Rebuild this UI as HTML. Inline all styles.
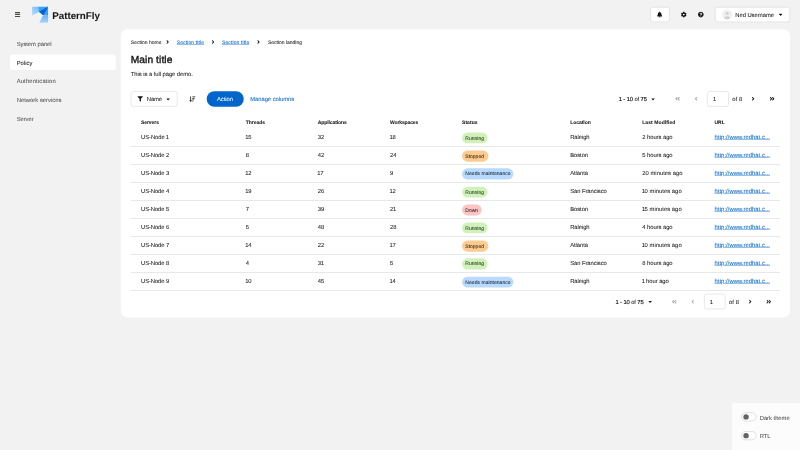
<!DOCTYPE html>
<html lang="en"><head><meta charset="utf-8"><title>PatternFly table demo</title>
<style>
html,body{margin:0;padding:0;width:800px;height:450px;overflow:hidden;background:#f2f2f2}
body{font-family:"Liberation Sans",sans-serif;color:#151515}
#stage{position:absolute;left:0;top:0;width:1920px;height:1080px;transform:scale(0.4166667);transform-origin:0 0;overflow:hidden;will-change:opacity;text-rendering:geometricPrecision}
.t{position:absolute;white-space:pre;margin:0;-webkit-text-stroke:0.1px}
.ic{position:absolute;display:block;overflow:visible}
.box{position:absolute;box-sizing:border-box}
.ctl{background:#fff;border:1px solid #c7c7c7;border-radius:6px}
.m{-webkit-text-stroke:0.35px}
.d1{margin:0 -1.1px}
a{color:#0066cc;text-decoration:underline}
.lbl{position:absolute;box-sizing:border-box;height:26.4px;border-radius:13.2px;font-size:12px;line-height:27.4px;padding:0 8px;white-space:pre;-webkit-text-stroke:0.1px}
.g{background:#d1f1bb;color:#1c2e10}.o{background:#fccb8f;color:#33200c}.b{background:#b9dafc;color:#0f2238}.r{background:#fbc5c5;color:#381414}
.line{position:absolute;left:314px;width:1558px;height:1px;background:#c7c7c7}
</style></head><body><div id="stage">

<svg class="ic" viewBox="0 0 448 512" width="12.25" height="14.00" style="left:35.88px;top:28.20px"><path fill="#151515" d="M16 132h416c8.837 0 16-7.163 16-16V76c0-8.837-7.163-16-16-16H16C7.163 60 0 67.163 0 76v40c0 8.837 7.163 16 16 16zm0 160h416c8.837 0 16-7.163 16-16v-40c0-8.837-7.163-16-16-16H16c-8.837 0-16 7.163-16 16v40c0 8.837 7.163 16 16 16zm0 160h416c8.837 0 16-7.163 16-16v-40c0-8.837-7.163-16-16-16H16c-8.837 0-16 7.163-16 16v40c0 8.837 7.163 16 16 16z"/></svg>
<svg class="ic" viewBox="0 0 100 100" width="38.4" height="38.4" style="left:76.8px;top:16.1px">
<defs><linearGradient id="lg1" x1="1" y1="0" x2="0" y2="1"><stop offset="0" stop-color="#74baf9"/><stop offset="1" stop-color="#b8ddfd"/></linearGradient><linearGradient id="lg2" x1="0" y1="0" x2="0" y2="1"><stop offset="0" stop-color="#66b3f8"/><stop offset="1" stop-color="#a8d5fc"/></linearGradient></defs>
<path fill="url(#lg1)" d="M0 6a6 6 0 0 1 6-6h33l5 31L0 56z"/>
<path fill="#3a9ff5" d="M38 0H100V57L69 53 43 31z"/>
<path fill="#0066cc" d="M100 0L43 31l27 23z"/>
<path fill="url(#lg2)" d="M69 53l31 4v37a6 6 0 0 1-6 6H45z"/>
</svg>
<div class="t" style="left:125.6px;top:22.6px;font-size:23.5px;line-height:30px;font-weight:700;letter-spacing:-0.1px;">PatternFly</div>
<div class="box ctl" style="left:1561px;top:17px;width:45.5px;height:36px"></div>
<svg class="ic" viewBox="0 0 448 512" width="12.25" height="14.00" style="left:1577.38px;top:28.00px"><path fill="#151515" d="M224 512c35.32 0 63.97-28.65 63.97-64H160.03c0 35.35 28.65 64 63.97 64zm215.39-149.71c-19.32-20.76-55.47-51.99-55.47-154.29 0-77.7-54.48-139.9-127.94-155.16V32c0-17.67-14.32-32-31.98-32s-31.98 14.33-31.98 32v20.84C118.56 68.1 64.08 130.3 64.08 208c0 102.3-36.15 133.53-55.47 154.29-6 6.45-8.66 14.16-8.61 21.71.11 16.4 12.98 32 32.1 32h383.8c19.12 0 32-15.6 32.1-32 .05-7.55-2.61-15.27-8.61-21.71z"/></svg>
<svg class="ic" viewBox="0 0 512 512" width="14.00" height="14.00" style="left:1634.00px;top:27.80px"><path fill="#151515" d="M487.4 315.7l-42.6-24.6c4.3-23.2 4.3-47 0-70.2l42.6-24.6c4.9-2.8 7.1-8.6 5.5-14-11.1-35.6-30-67.8-54.7-94.6-3.8-4.1-10-5.1-14.8-2.3L380.8 110c-17.9-15.4-38.5-27.3-60.8-35.1V25.8c0-5.6-3.9-10.5-9.4-11.7-36.7-8.2-74.3-7.8-109.2 0-5.5 1.2-9.4 6.1-9.4 11.7V75c-22.2 7.9-42.8 19.8-60.8 35.1L88.7 85.5c-4.9-2.8-11-1.9-14.8 2.3-24.7 26.7-43.6 58.9-54.7 94.6-1.700 5.400.600 11.200 5.500 14L67.300 221c-4.300 23.200-4.300 47 0 70.200l-42.600 24.600c-4.900 2.800-7.100 8.600-5.500 14 11.100 35.600 30 67.800 54.700 94.600 3.800 4.100 10 5.100 14.800 2.300l42.600-24.600c17.900 15.400 38.500 27.300 60.800 35.100v49.200c0 5.600 3.900 10.500 9.400 11.700 36.700 8.200 74.300 7.800 109.200 0 5.500-1.200 9.400-6.100 9.400-11.700v-49.200c22.200-7.900 42.800-19.800 60.800-35.100l42.600 24.600c4.900 2.800 11 1.900 14.800-2.300 24.700-26.700 43.600-58.900 54.700-94.600 1.500-5.500-.7-11.300-5.600-14.100zM256 336c-44.100 0-80-35.900-80-80s35.900-80 80-80 80 35.900 80 80-35.900 80-80 80z"/></svg>
<svg class="ic" viewBox="0 0 512 512" width="14.00" height="14.00" style="left:1675.00px;top:27.80px"><path fill="#151515" d="M504 256c0 136.997-111.043 248-248 248S8 392.997 8 256C8 119.083 119.043 8 256 8s248 111.083 248 248zM262.655 90c-54.497 0-89.255 22.957-116.549 63.758-3.536 5.286-2.353 12.415 2.715 16.258l34.699 26.31c5.205 3.947 12.621 3.008 16.665-2.122 17.864-22.658 30.113-35.797 57.303-35.797 20.429 0 45.698 13.148 45.698 32.958 0 14.976-12.363 22.667-32.534 33.976C247.128 238.528 216 254.941 216 296v4c0 6.627 5.373 12 12 12h56c6.627 0 12-5.373 12-12v-1.333c0-28.462 83.186-29.647 83.186-106.667 0-58.002-60.165-102-116.531-102zM256 338c-25.365 0-46 20.635-46 46 0 25.364 20.635 46 46 46s46-20.636 46-46c0-25.365-20.635-46-46-46z"/></svg>
<div class="box ctl" style="left:1716px;top:17px;width:179.5px;height:36px"></div>
<svg class="ic" viewBox="0 0 36 36" width="24" height="24" style="left:1732.5px;top:23px"><defs><clipPath id="av"><circle cx="18" cy="18" r="18"/></clipPath></defs><circle cx="18" cy="18" r="18" fill="#f0f0f0"/><circle cx="18" cy="13.600" r="5.800" fill="#d2d2d2"/><ellipse cx="18" cy="34" rx="11.500" ry="10" fill="#d2d2d2" clip-path="url(#av)"/></svg>
<div class="t" style="left:1764.7px;top:25.7px;font-size:14px;line-height:21px;letter-spacing:-0.11px;">Ned Username</div>
<svg class="ic" viewBox="0 0 320 512" width="8.75" height="14.00" style="left:1868.62px;top:28.30px"><path fill="#151515" d="M31.3 192h257.3c17.8 0 26.7 21.5 14.1 34.1L174.1 354.8c-7.8 7.8-20.5 7.8-28.300 0L17.200 226.100C4.600 213.500 13.500 192 31.300 192z"/></svg>
<div class="t" style="left:40.0px;top:94.9px;font-size:14px;line-height:21px;color:#4d4d4d;letter-spacing:-0.1px;">System panel</div>
<div class="box" style="left:24px;top:130.5px;width:254px;height:37.5px;background:#fff;border-radius:6px"></div>
<div class="t" style="left:40.0px;top:139.9px;font-size:14px;line-height:21px;letter-spacing:0.1px;">Policy</div>
<div class="t" style="left:40.0px;top:184.9px;font-size:14px;line-height:21px;color:#4d4d4d;letter-spacing:0.38px;">Authentication</div>
<div class="t" style="left:40.0px;top:229.9px;font-size:14px;line-height:21px;color:#4d4d4d;letter-spacing:0.06px;">Network services</div>
<div class="t" style="left:40.0px;top:274.9px;font-size:14px;line-height:21px;color:#4d4d4d;letter-spacing:-0.1px;">Server</div>
<div class="box" style="left:290px;top:69.5px;width:1606px;height:692.5px;background:#fff;border-radius:16px"></div>
<div class="t" style="left:313.8px;top:93.4px;font-size:12px;line-height:18px;letter-spacing:0.03px;">Section home</div>
<svg class="ic" viewBox="0 0 256 512" width="6.75" height="13.50" style="left:398.62px;top:94.05px"><path fill="#151515" d="M224.3 273l-136 136c-9.4 9.4-24.6 9.4-33.9 0l-22.6-22.6c-9.4-9.4-9.4-24.6 0-33.900l96.400-96.400-96.400-96.400c-9.400-9.400-9.400-24.600 0-33.900L54.300 103c9.400-9.400 24.600-9.400 33.900 0l136 136c9.500 9.400 9.500 24.600.1 34z"/></svg>
<div class="t" style="left:424.2px;top:93.4px;font-size:12px;line-height:18px;color:#0066cc;letter-spacing:0.28px;"><a>Section title</a></div>
<svg class="ic" viewBox="0 0 256 512" width="6.75" height="13.50" style="left:507.82px;top:94.05px"><path fill="#151515" d="M224.3 273l-136 136c-9.4 9.4-24.6 9.4-33.9 0l-22.6-22.6c-9.4-9.4-9.4-24.6 0-33.900l96.400-96.400-96.400-96.400c-9.400-9.400-9.400-24.600 0-33.900L54.300 103c9.400-9.400 24.600-9.400 33.900 0l136 136c9.500 9.400 9.500 24.600.1 34z"/></svg>
<div class="t" style="left:532.8px;top:93.4px;font-size:12px;line-height:18px;color:#0066cc;letter-spacing:0.28px;"><a>Section title</a></div>
<svg class="ic" viewBox="0 0 256 512" width="6.75" height="13.50" style="left:617.02px;top:94.05px"><path fill="#151515" d="M224.3 273l-136 136c-9.4 9.4-24.6 9.4-33.9 0l-22.6-22.6c-9.4-9.4-9.4-24.6 0-33.900l96.400-96.400-96.400-96.400c-9.400-9.400-9.400-24.600 0-33.900L54.300 103c9.400-9.400 24.600-9.400 33.900 0l136 136c9.500 9.400 9.500 24.600.1 34z"/></svg>
<div class="t" style="left:643.2px;top:93.4px;font-size:12px;line-height:18px;letter-spacing:-0.03px;">Section landing</div>
<div class="t" style="left:313.5px;top:129.1px;font-size:24.5px;line-height:32px;letter-spacing:0.25px;-webkit-text-stroke:0.9px;">Main title</div>
<div class="t" style="left:314.0px;top:168.3px;font-size:14px;line-height:21px;letter-spacing:-0.12px;">This is a full page demo.</div>
<div class="box ctl" style="left:314px;top:219.0px;width:112px;height:36.6px"></div>
<svg class="ic" viewBox="0 0 512 512" width="13.00" height="13.00" style="left:330.30px;top:230.80px"><path fill="#151515" d="M487.976 0H24.028C2.71 0-8.047 25.866 7.058 40.971L192 225.941V432c0 7.831 3.821 15.17 10.237 19.662l80 55.98C298.02 518.69 320 507.493 320 487.98V225.941l184.947-184.97C520.021 25.896 509.338 0 487.976 0z"/></svg>
<div class="t" style="left:352.3px;top:228.0px;font-size:14px;line-height:21px;letter-spacing:-0.2px;">Name</div>
<svg class="ic" viewBox="0 0 320 512" width="8.75" height="14.00" style="left:399.43px;top:230.70px"><path fill="#151515" d="M31.3 192h257.3c17.8 0 26.7 21.5 14.1 34.1L174.1 354.8c-7.8 7.8-20.5 7.8-28.300 0L17.200 226.100C4.600 213.500 13.500 192 31.300 192z"/></svg>
<svg class="ic" viewBox="0 0 16 14" width="15" height="13.5" style="left:453.80px;top:230.55px"><path fill="#151515" d="M2.700 0.400h2.200v9.400h1.600c.5 0 .7.5.4.9L4.300 13.600c-.3.300-.7.300-1 0L.700 10.700c-.3-.4-.1-.9.400-.9H3z"/><rect fill="#151515" x="8" y="0.4" width="7.8" height="2" rx=".5"/><rect fill="#151515" x="8" y="4.1" width="6" height="2" rx=".5"/><rect fill="#151515" x="8" y="7.800" width="4.200" height="2" rx=".5"/><rect fill="#151515" x="8" y="11.500" width="2.400" height="2" rx=".5"/></svg>
<div class="box" style="left:495.6px;top:219.0px;width:89.6px;height:36.6px;border-radius:18.3px;background:#0066cc"></div>
<div class="t" style="left:495.6px;top:228.0px;font-size:14px;line-height:21px;color:#fff;letter-spacing:-0.1px;width:88.8px;text-align:center;">Action</div>
<div class="t" style="left:600.6px;top:228.0px;font-size:14px;line-height:21px;color:#0066cc;letter-spacing:-0.11px;">Manage columns</div>
<div class="t" style="left:1485.0px;top:228.0px;font-size:14px;line-height:21px;letter-spacing:-0.3px;"><span class="m">1 - 10</span> of <span class="m">75</span></div><svg class="ic" viewBox="0 0 320 512" width="8.75" height="14.00" style="left:1563.42px;top:230.70px"><path fill="#151515" d="M31.3 192h257.3c17.8 0 26.7 21.5 14.1 34.1L174.1 354.8c-7.8 7.8-20.5 7.8-28.300 0L17.200 226.100C4.600 213.500 13.500 192 31.300 192z"/></svg><svg class="ic" viewBox="0 0 448 512" width="12.25" height="14.00" style="left:1619.88px;top:230.30px;transform:scaleX(-1)"><path fill="#a3a3a3" d="M224.3 273l-136 136c-9.4 9.4-24.6 9.4-33.9 0l-22.6-22.6c-9.4-9.4-9.4-24.6 0-33.9l96.400-96.400-96.400-96.400c-9.400-9.400-9.400-24.600 0-33.900L54.300 103c9.400-9.400 24.600-9.400 33.900 0l136 136c9.500 9.400 9.500 24.600.1 34zm192-34l-136-136c-9.400-9.400-24.600-9.400-33.900 0l-22.600 22.600c-9.400 9.400-9.400 24.600 0 33.900l96.400 96.400-96.400 96.400c-9.400 9.400-9.400 24.600 0 33.900l22.600 22.600c9.400 9.400 24.600 9.400 33.900 0l136-136c9.400-9.200 9.400-24.400 0-33.800z"/></svg><svg class="ic" viewBox="0 0 256 512" width="7.00" height="14.00" style="left:1666.90px;top:230.30px;transform:scaleX(-1)"><path fill="#a3a3a3" d="M224.3 273l-136 136c-9.4 9.4-24.6 9.4-33.9 0l-22.6-22.6c-9.4-9.4-9.4-24.6 0-33.900l96.400-96.400-96.400-96.400c-9.400-9.400-9.400-24.600 0-33.900L54.300 103c9.400-9.400 24.600-9.400 33.900 0l136 136c9.500 9.400 9.500 24.600.1 34z"/></svg><div class="box ctl" style="left:1697.4px;top:219.0px;width:51.6px;height:36.6px"></div><div class="t" style="left:1711.2px;top:228.0px;font-size:14px;line-height:21px;">1</div><div class="t" style="left:1757.4px;top:228.0px;font-size:14px;line-height:21px;letter-spacing:0.3px;">of 8</div><svg class="ic" viewBox="0 0 256 512" width="7.00" height="14.00" style="left:1804.30px;top:230.30px"><path fill="#151515" d="M224.3 273l-136 136c-9.4 9.4-24.6 9.4-33.9 0l-22.6-22.6c-9.4-9.4-9.4-24.6 0-33.900l96.400-96.400-96.400-96.400c-9.400-9.400-9.400-24.600 0-33.900L54.300 103c9.400-9.400 24.600-9.400 33.900 0l136 136c9.500 9.400 9.500 24.600.1 34z"/></svg><svg class="ic" viewBox="0 0 448 512" width="12.25" height="14.00" style="left:1846.67px;top:230.30px"><path fill="#151515" d="M224.3 273l-136 136c-9.4 9.4-24.6 9.4-33.9 0l-22.6-22.6c-9.4-9.4-9.4-24.6 0-33.9l96.400-96.400-96.400-96.400c-9.400-9.400-9.400-24.600 0-33.900L54.300 103c9.400-9.400 24.600-9.400 33.900 0l136 136c9.500 9.400 9.500 24.600.1 34zm192-34l-136-136c-9.400-9.400-24.600-9.400-33.900 0l-22.600 22.600c-9.400 9.400-9.400 24.600 0 33.900l96.400 96.400-96.400 96.400c-9.400 9.400-9.400 24.600 0 33.900l22.600 22.600c9.400 9.400 24.600 9.400 33.900 0l136-136c9.400-9.200 9.400-24.400 0-33.800z"/></svg>
<div class="t" style="left:338.4px;top:284.8px;font-size:12px;line-height:18px;font-weight:700;letter-spacing:-0.15px;">Servers</div>
<div class="t" style="left:589.8px;top:284.8px;font-size:12px;line-height:18px;font-weight:700;letter-spacing:-0.1px;">Threads</div>
<div class="t" style="left:762.6px;top:284.8px;font-size:12px;line-height:18px;font-weight:700;letter-spacing:-0.2px;">Applications</div>
<div class="t" style="left:936.0px;top:284.8px;font-size:12px;line-height:18px;font-weight:700;letter-spacing:-0.3px;">Workspaces</div>
<div class="t" style="left:1108.8px;top:284.8px;font-size:12px;line-height:18px;font-weight:700;letter-spacing:0.15px;">Status</div>
<div class="t" style="left:1368.5px;top:284.8px;font-size:12px;line-height:18px;font-weight:700;letter-spacing:-0.1px;">Location</div>
<div class="t" style="left:1541.3px;top:284.8px;font-size:12px;line-height:18px;font-weight:700;letter-spacing:0.2px;">Last Modified</div>
<div class="t" style="left:1714.8px;top:284.8px;font-size:12px;line-height:18px;font-weight:700;">URL</div>
<div class="t" style="left:338.4px;top:318.5px;font-size:14px;line-height:21px;letter-spacing:-0.1px;">US-Node <span class="d1">1</span></div>
<div class="t" style="left:589.8px;top:318.5px;font-size:14px;line-height:21px;letter-spacing:0.25px;"><span class="d1">1</span>5</div>
<div class="t" style="left:762.6px;top:318.5px;font-size:14px;line-height:21px;letter-spacing:0.25px;">32</div>
<div class="t" style="left:936.0px;top:318.5px;font-size:14px;line-height:21px;letter-spacing:0.25px;"><span class="d1">1</span>8</div>
<div class="lbl g" style="left:1108.8px;top:318.0px;width:61px">Running</div>
<div class="t" style="left:1368.5px;top:318.5px;font-size:14px;line-height:21px;letter-spacing:-0.15px;">Raleigh</div>
<div class="t" style="left:1541.3px;top:318.5px;font-size:14px;line-height:21px;letter-spacing:-0.1px;">2 hours ago</div>
<div class="t" style="left:1714.8px;top:318.5px;font-size:14px;line-height:21px;color:#0066cc;letter-spacing:0.1px;"><a>http://www.redhat.c...</a></div>
<div class="line" style="top:350.9px"></div>
<div class="t" style="left:338.4px;top:361.7px;font-size:14px;line-height:21px;letter-spacing:-0.2px;">US-Node 2</div>
<div class="t" style="left:589.8px;top:361.7px;font-size:14px;line-height:21px;letter-spacing:0.25px;">8</div>
<div class="t" style="left:762.6px;top:361.7px;font-size:14px;line-height:21px;letter-spacing:0.25px;">42</div>
<div class="t" style="left:936.0px;top:361.7px;font-size:14px;line-height:21px;letter-spacing:0.25px;">24</div>
<div class="lbl o" style="left:1108.8px;top:361.2px;width:63.4px">Stopped</div>
<div class="t" style="left:1368.5px;top:361.7px;font-size:14px;line-height:21px;letter-spacing:-0.15px;">Boston</div>
<div class="t" style="left:1541.3px;top:361.7px;font-size:14px;line-height:21px;letter-spacing:-0.1px;">5 hours ago</div>
<div class="t" style="left:1714.8px;top:361.7px;font-size:14px;line-height:21px;color:#0066cc;letter-spacing:0.1px;"><a>http://www.redhat.c...</a></div>
<div class="line" style="top:394.1px"></div>
<div class="t" style="left:338.4px;top:404.9px;font-size:14px;line-height:21px;letter-spacing:-0.2px;">US-Node 3</div>
<div class="t" style="left:589.8px;top:404.9px;font-size:14px;line-height:21px;letter-spacing:0.25px;"><span class="d1">1</span>2</div>
<div class="t" style="left:762.6px;top:404.9px;font-size:14px;line-height:21px;letter-spacing:0.25px;"><span class="d1">1</span>7</div>
<div class="t" style="left:936.0px;top:404.9px;font-size:14px;line-height:21px;letter-spacing:0.25px;">9</div>
<div class="lbl b" style="left:1108.8px;top:404.4px;width:123.6px;letter-spacing:0.12px">Needs maintenance</div>
<div class="t" style="left:1368.5px;top:404.9px;font-size:14px;line-height:21px;letter-spacing:-0.15px;">Atlanta</div>
<div class="t" style="left:1541.3px;top:404.9px;font-size:14px;line-height:21px;letter-spacing:0.08px;">20 minutes ago</div>
<div class="t" style="left:1714.8px;top:404.9px;font-size:14px;line-height:21px;color:#0066cc;letter-spacing:0.1px;"><a>http://www.redhat.c...</a></div>
<div class="line" style="top:437.3px"></div>
<div class="t" style="left:338.4px;top:448.1px;font-size:14px;line-height:21px;letter-spacing:-0.2px;">US-Node 4</div>
<div class="t" style="left:589.8px;top:448.1px;font-size:14px;line-height:21px;letter-spacing:0.25px;"><span class="d1">1</span>9</div>
<div class="t" style="left:762.6px;top:448.1px;font-size:14px;line-height:21px;letter-spacing:0.25px;">26</div>
<div class="t" style="left:936.0px;top:448.1px;font-size:14px;line-height:21px;letter-spacing:0.25px;"><span class="d1">1</span>2</div>
<div class="lbl g" style="left:1108.8px;top:447.6px;width:61px">Running</div>
<div class="t" style="left:1368.5px;top:448.1px;font-size:14px;line-height:21px;letter-spacing:-0.15px;">San Francisco</div>
<div class="t" style="left:1541.3px;top:448.1px;font-size:14px;line-height:21px;letter-spacing:0.08px;"><span class="d1">1</span>0 minutes ago</div>
<div class="t" style="left:1714.8px;top:448.1px;font-size:14px;line-height:21px;color:#0066cc;letter-spacing:0.1px;"><a>http://www.redhat.c...</a></div>
<div class="line" style="top:480.5px"></div>
<div class="t" style="left:338.4px;top:491.3px;font-size:14px;line-height:21px;letter-spacing:-0.2px;">US-Node 5</div>
<div class="t" style="left:589.8px;top:491.3px;font-size:14px;line-height:21px;letter-spacing:0.25px;">7</div>
<div class="t" style="left:762.6px;top:491.3px;font-size:14px;line-height:21px;letter-spacing:0.25px;">39</div>
<div class="t" style="left:936.0px;top:491.3px;font-size:14px;line-height:21px;letter-spacing:0.25px;">2<span class="d1">1</span></div>
<div class="lbl r" style="left:1108.8px;top:490.8px;width:47.6px">Down</div>
<div class="t" style="left:1368.5px;top:491.3px;font-size:14px;line-height:21px;letter-spacing:-0.15px;">Boston</div>
<div class="t" style="left:1541.3px;top:491.3px;font-size:14px;line-height:21px;letter-spacing:0.08px;"><span class="d1">1</span>5 minutes ago</div>
<div class="t" style="left:1714.8px;top:491.3px;font-size:14px;line-height:21px;color:#0066cc;letter-spacing:0.1px;"><a>http://www.redhat.c...</a></div>
<div class="line" style="top:523.7px"></div>
<div class="t" style="left:338.4px;top:534.5px;font-size:14px;line-height:21px;letter-spacing:-0.2px;">US-Node 6</div>
<div class="t" style="left:589.8px;top:534.5px;font-size:14px;line-height:21px;letter-spacing:0.25px;">5</div>
<div class="t" style="left:762.6px;top:534.5px;font-size:14px;line-height:21px;letter-spacing:0.25px;">48</div>
<div class="t" style="left:936.0px;top:534.5px;font-size:14px;line-height:21px;letter-spacing:0.25px;">28</div>
<div class="lbl g" style="left:1108.8px;top:534.0px;width:61px">Running</div>
<div class="t" style="left:1368.5px;top:534.5px;font-size:14px;line-height:21px;letter-spacing:-0.15px;">Raleigh</div>
<div class="t" style="left:1541.3px;top:534.5px;font-size:14px;line-height:21px;letter-spacing:-0.1px;">4 hours ago</div>
<div class="t" style="left:1714.8px;top:534.5px;font-size:14px;line-height:21px;color:#0066cc;letter-spacing:0.1px;"><a>http://www.redhat.c...</a></div>
<div class="line" style="top:566.9px"></div>
<div class="t" style="left:338.4px;top:577.7px;font-size:14px;line-height:21px;letter-spacing:-0.2px;">US-Node 7</div>
<div class="t" style="left:589.8px;top:577.7px;font-size:14px;line-height:21px;letter-spacing:0.25px;"><span class="d1">1</span>4</div>
<div class="t" style="left:762.6px;top:577.7px;font-size:14px;line-height:21px;letter-spacing:0.25px;">22</div>
<div class="t" style="left:936.0px;top:577.7px;font-size:14px;line-height:21px;letter-spacing:0.25px;"><span class="d1">1</span>7</div>
<div class="lbl o" style="left:1108.8px;top:577.2px;width:63.4px">Stopped</div>
<div class="t" style="left:1368.5px;top:577.7px;font-size:14px;line-height:21px;letter-spacing:-0.15px;">Atlanta</div>
<div class="t" style="left:1541.3px;top:577.7px;font-size:14px;line-height:21px;letter-spacing:0.08px;"><span class="d1">1</span>0 minutes ago</div>
<div class="t" style="left:1714.8px;top:577.7px;font-size:14px;line-height:21px;color:#0066cc;letter-spacing:0.1px;"><a>http://www.redhat.c...</a></div>
<div class="line" style="top:610.1px"></div>
<div class="t" style="left:338.4px;top:620.9px;font-size:14px;line-height:21px;letter-spacing:-0.2px;">US-Node 8</div>
<div class="t" style="left:589.8px;top:620.9px;font-size:14px;line-height:21px;letter-spacing:0.25px;">4</div>
<div class="t" style="left:762.6px;top:620.9px;font-size:14px;line-height:21px;letter-spacing:0.25px;">3<span class="d1">1</span></div>
<div class="t" style="left:936.0px;top:620.9px;font-size:14px;line-height:21px;letter-spacing:0.25px;">5</div>
<div class="lbl g" style="left:1108.8px;top:620.4px;width:61px">Running</div>
<div class="t" style="left:1368.5px;top:620.9px;font-size:14px;line-height:21px;letter-spacing:-0.15px;">San Francisco</div>
<div class="t" style="left:1541.3px;top:620.9px;font-size:14px;line-height:21px;letter-spacing:-0.1px;">8 hours ago</div>
<div class="t" style="left:1714.8px;top:620.9px;font-size:14px;line-height:21px;color:#0066cc;letter-spacing:0.1px;"><a>http://www.redhat.c...</a></div>
<div class="line" style="top:653.3px"></div>
<div class="t" style="left:338.4px;top:664.1px;font-size:14px;line-height:21px;letter-spacing:-0.2px;">US-Node 9</div>
<div class="t" style="left:589.8px;top:664.1px;font-size:14px;line-height:21px;letter-spacing:0.25px;"><span class="d1">1</span>0</div>
<div class="t" style="left:762.6px;top:664.1px;font-size:14px;line-height:21px;letter-spacing:0.25px;">45</div>
<div class="t" style="left:936.0px;top:664.1px;font-size:14px;line-height:21px;letter-spacing:0.25px;"><span class="d1">1</span>4</div>
<div class="lbl b" style="left:1108.8px;top:663.6px;width:123.6px;letter-spacing:0.12px">Needs maintenance</div>
<div class="t" style="left:1368.5px;top:664.1px;font-size:14px;line-height:21px;letter-spacing:-0.15px;">Raleigh</div>
<div class="t" style="left:1541.3px;top:664.1px;font-size:14px;line-height:21px;letter-spacing:-0.1px;"><span class="d1">1</span> hour ago</div>
<div class="t" style="left:1714.8px;top:664.1px;font-size:14px;line-height:21px;color:#0066cc;letter-spacing:0.1px;"><a>http://www.redhat.c...</a></div>
<div class="line" style="top:696.5px"></div>
<div class="t" style="left:1477.2px;top:714.3px;font-size:14px;line-height:21px;letter-spacing:-0.3px;"><span class="m">1 - 10</span> of <span class="m">75</span></div><svg class="ic" viewBox="0 0 320 512" width="8.75" height="14.00" style="left:1555.62px;top:717.00px"><path fill="#151515" d="M31.3 192h257.3c17.8 0 26.7 21.5 14.1 34.1L174.1 354.8c-7.8 7.8-20.5 7.8-28.300 0L17.200 226.100C4.600 213.500 13.500 192 31.300 192z"/></svg><svg class="ic" viewBox="0 0 448 512" width="12.25" height="14.00" style="left:1612.08px;top:716.60px;transform:scaleX(-1)"><path fill="#a3a3a3" d="M224.3 273l-136 136c-9.4 9.4-24.6 9.4-33.9 0l-22.6-22.6c-9.4-9.4-9.4-24.6 0-33.9l96.400-96.400-96.400-96.400c-9.400-9.400-9.400-24.600 0-33.900L54.300 103c9.400-9.400 24.600-9.400 33.900 0l136 136c9.500 9.400 9.500 24.600.1 34zm192-34l-136-136c-9.400-9.400-24.600-9.400-33.900 0l-22.600 22.600c-9.400 9.400-9.400 24.600 0 33.900l96.400 96.400-96.400 96.400c-9.400 9.400-9.400 24.600 0 33.900l22.600 22.600c9.400 9.400 24.600 9.400 33.900 0l136-136c9.400-9.200 9.400-24.400 0-33.800z"/></svg><svg class="ic" viewBox="0 0 256 512" width="7.00" height="14.00" style="left:1659.10px;top:716.60px;transform:scaleX(-1)"><path fill="#a3a3a3" d="M224.3 273l-136 136c-9.4 9.4-24.6 9.4-33.9 0l-22.6-22.6c-9.4-9.4-9.4-24.6 0-33.900l96.400-96.400-96.400-96.400c-9.400-9.400-9.400-24.600 0-33.900L54.300 103c9.400-9.400 24.600-9.400 33.900 0l136 136c9.500 9.400 9.500 24.600.1 34z"/></svg><div class="box ctl" style="left:1689.6000000000001px;top:705.3000000000001px;width:51.6px;height:36.6px"></div><div class="t" style="left:1703.4px;top:714.3px;font-size:14px;line-height:21px;">1</div><div class="t" style="left:1749.6px;top:714.3px;font-size:14px;line-height:21px;letter-spacing:0.3px;">of 8</div><svg class="ic" viewBox="0 0 256 512" width="7.00" height="14.00" style="left:1796.50px;top:716.60px"><path fill="#151515" d="M224.3 273l-136 136c-9.4 9.4-24.6 9.4-33.9 0l-22.6-22.6c-9.4-9.4-9.4-24.6 0-33.900l96.400-96.400-96.400-96.400c-9.400-9.400-9.400-24.600 0-33.900L54.300 103c9.400-9.400 24.600-9.400 33.900 0l136 136c9.500 9.400 9.500 24.600.1 34z"/></svg><svg class="ic" viewBox="0 0 448 512" width="12.25" height="14.00" style="left:1838.88px;top:716.60px"><path fill="#151515" d="M224.3 273l-136 136c-9.4 9.4-24.6 9.4-33.9 0l-22.6-22.6c-9.4-9.4-9.4-24.6 0-33.9l96.400-96.400-96.400-96.400c-9.400-9.400-9.400-24.600 0-33.900L54.300 103c9.400-9.400 24.600-9.400 33.900 0l136 136c9.500 9.400 9.500 24.600.1 34zm192-34l-136-136c-9.400-9.400-24.600-9.400-33.900 0l-22.600 22.600c-9.400 9.400-9.400 24.600 0 33.900l96.400 96.400-96.400 96.400c-9.400 9.400-9.400 24.600 0 33.900l22.600 22.600c9.400 9.400 24.600 9.400 33.900 0l136-136c9.400-9.200 9.400-24.400 0-33.800z"/></svg>
<div class="box" style="left:1756.8px;top:966.5px;width:170px;height:120px;background:#fcfcfc"></div>
<div class="box" style="left:1779px;top:990.4px;width:36px;height:20.8px;border-radius:10.4px;background:#fff;border:1px solid #b8b8b8"></div>
<div class="box" style="left:1784.0px;top:994.4px;width:12.8px;height:12.8px;border-radius:50%;background:#636363"></div>
<div class="t" style="left:1823.3px;top:991.5px;font-size:14px;line-height:21px;color:#4d4d4d;letter-spacing:-0.05px;">Dark theme</div>
<div class="box" style="left:1779px;top:1035.3px;width:36px;height:20.8px;border-radius:10.4px;background:#fff;border:1px solid #b8b8b8"></div>
<div class="box" style="left:1784.0px;top:1039.3px;width:12.8px;height:12.8px;border-radius:50%;background:#636363"></div>
<div class="t" style="left:1823.3px;top:1036.4px;font-size:14px;line-height:21px;color:#4d4d4d;letter-spacing:-0.05px;">RTL</div>
</div></body></html>
